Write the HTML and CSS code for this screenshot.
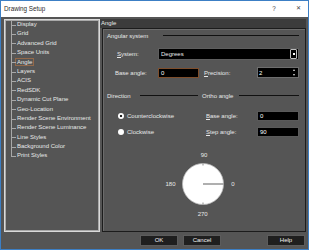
FILE: index.html
```html
<!DOCTYPE html>
<html lang="en">
<head>
    <meta charset="UTF-8">
    <title>Drawing Setup</title>
    <link rel="stylesheet" href="styles.css">
</head>
<body>

<div class="window">
    <div class="titlebar">
        <span class="title">Drawing Setup</span>
        <span class="tb-btn tb-help">?</span>
        <span class="tb-btn tb-close">&#x2715;</span>
    </div>

    <div class="main">
        <div class="tree">
            <ul>
                <li>Display</li>
                <li>Grid</li>
                <li>Advanced Grid</li>
                <li>Space Units</li>
                <li><span class="sel">Angle</span></li>
                <li>Layers</li>
                <li>ACIS</li>
                <li>RedSDK</li>
                <li>Dynamic Cut Plane</li>
                <li>Geo-Location</li>
                <li>Render Scene Environment</li>
                <li>Render Scene Luminance</li>
                <li>Line Styles</li>
                <li>Background Color</li>
                <li>Print Styles</li>
            </ul>
        </div>

        <div class="page">
            <div class="page-head">Angle</div>
            <div class="page-body">
                <div class="section">
                    <span class="sec-label w-angular">Angular system</span>
                    <i class="rule"></i>
                </div>

                <div class="row-system">
                    <label class="lbl-system"><u>S</u>ystem:</label>
                    <div class="combo">
                        <span>Degrees</span>
                        <span class="drop"><i></i></span>
                    </div>
                </div>

                <div class="row-base">
                    <label class="lbl-base">Base angle:</label>
                    <div class="field field-focus">0</div>
                    <label class="lbl-prec"><u>P</u>recision:</label>
                    <div class="field spin">
                        <span>2</span>
                        <span class="arrows"><i class="up"></i><i class="down"></i></span>
                    </div>
                </div>

                <div class="cols">
                    <div class="col">
                        <div class="section">
                            <span class="sec-label w-direction">Direction</span>
                            <i class="rule"></i>
                        </div>
                        <div class="radio-row first">
                            <span class="radio checked"></span>
                            <span>Counterclockwise</span>
                        </div>
                        <div class="radio-row">
                            <span class="radio"></span>
                            <span>Clockwise</span>
                        </div>
                    </div>
                    <div class="col">
                        <div class="section">
                            <span class="sec-label w-ortho">Ortho angle</span>
                            <i class="rule"></i>
                        </div>
                        <div class="ortho-row first">
                            <label><u>B</u>ase angle:</label>
                            <div class="field">0</div>
                        </div>
                        <div class="ortho-row">
                            <label><u>S</u>tep angle:</label>
                            <div class="field">90</div>
                        </div>
                    </div>
                </div>

                <svg class="dial" width="90" height="72" viewBox="0 0 90 72">
                    <text x="46" y="6.5" text-anchor="middle">90</text>
                    <text x="12.5" y="35.6" text-anchor="middle">180</text>
                    <text x="75" y="35.6" text-anchor="middle">0</text>
                    <text x="44.7" y="66.2" text-anchor="middle">270</text>
                    <circle cx="45" cy="34" r="20.5" fill="#fff" stroke="#bcbcbc" stroke-width="0.8"/>
                    <line x1="45" y1="13.5" x2="45" y2="15.5" stroke="#8a8a8a" stroke-width="1"/>
                    <line x1="45" y1="52.5" x2="45" y2="54.5" stroke="#8a8a8a" stroke-width="1"/>
                    <line x1="45" y1="34" x2="65.5" y2="34" stroke="#7a7a7a" stroke-width="1.2"/>
                </svg>
            </div>
        </div>
    </div>

    <div class="footer">
        <button class="btn">OK</button>
        <button class="btn">Cancel</button>
        <button class="btn btn-help">Help</button>
    </div>
</div>

</body>
</html>
```

FILE: styles.css
```css
* {box-sizing: border-box;}
html, body {margin: 0; padding: 0;}
body {
    width: 309px;
    height: 250px;
    overflow: hidden;
    background: #555;
    font-family: "Liberation Sans", Arial, sans-serif;
    font-size: 6px;
    color: #e8e8e8;
}
u {text-decoration: underline; text-underline-offset: 1px;}

.window {
    width: 309px;
    height: 250px;
    border: 1px solid #3c7fc5;
    background: #555;
    display: flex;
    flex-direction: column;
}

/* title bar */
.titlebar {
    flex: none;
    height: 16px;
    background: #fff;
    color: #2b2b2b;
    display: flex;
    align-items: flex-start;
    padding: 3px 5px 0 3px;
    line-height: 9px;
    font-size: 6.3px;
}
.titlebar .title {flex: 1;}
.tb-btn {width: 10px; text-align: center; color: #444;}
.tb-close {margin-left: 14px; font-size: 6px;}

/* main area */
.main {
    flex: 1;
    display: flex;
    padding: 2px 2px 0 3px;
    min-height: 0;
}

.tree {
    width: 96px;
    flex: none;
    border: 1px solid #dadada;
    box-shadow: inset 0 0 0 1px #a9a9a9;
}
.tree ul {list-style: none; margin: 0; padding: 0;}
.tree li {
    position: relative;
    height: 9.4px;
    line-height: 9.4px;
    padding-left: 12px;
    white-space: nowrap;
}
.tree li::before {
    content: "";
    position: absolute;
    left: 6px;
    top: 4.7px;
    width: 5px;
    border-top: 1px solid #a8a8a8;
}
.tree li::after {
    content: "";
    position: absolute;
    left: 6px;
    top: 0;
    bottom: 0;
    border-left: 1px solid #a8a8a8;
}
.tree li:last-child::after {bottom: 4.7px;}
.tree .sel {
    display: inline-block;
    line-height: 6px;
    padding: 0 1px;
    margin-left: -2px;
    border: 1px solid #93694a;
}

.page {
    flex: 1;
    display: flex;
    flex-direction: column;
}
.page-head {
    height: 9px;
    line-height: 9px;
    background: #3c3c3c;
    padding-left: 1px;
    flex: none;
}
.page-body {
    flex: 1;
    margin-left: 2px;
    border: 1px solid #1c1c1c;
    box-shadow: inset 1px 1px 0 #6c6c6c;
    padding: 0 6px 0 4px;
}

.section {
    display: flex;
    align-items: center;
    height: 9px;
    margin-top: 2px;
}
.sec-label {flex: none; white-space: nowrap;}
.w-angular {width: 56px;}
.w-direction {width: 33px;}
.w-ortho {width: 37px; margin-left: -1px;}
.rule {flex: 1; height: 1px; background: #111;}

.row-system {
    display: flex;
    align-items: center;
    height: 12px;
    margin-top: 8px;
}
.lbl-system {width: 51px; padding-left: 10px; flex: none;}
.combo {
    flex: 1;
    height: 12px;
    background: #000;
    border: 1px solid #5e5e5e;
    display: flex;
    align-items: center;
    padding-left: 2px;
}
.drop {
    margin-left: auto;
    margin-right: 1px;
    width: 7px;
    height: 10px;
    border: 1px solid #bdbdbd;
    border-radius: 1px;
    display: flex;
    align-items: center;
    justify-content: center;
}
.drop i {width: 2px; height: 2px; background: #fff;}

.row-base {
    display: grid;
    grid-template-columns: 51px 41px 1fr 42px;
    align-items: center;
    height: 11px;
    margin-top: 7px;
}
.lbl-base {padding-left: 8px;}
.lbl-prec {padding-left: 5px;}

.field {
    height: 10px;
    line-height: 8px;
    background: #000;
    border: 1px solid #5a5a5a;
    padding-left: 2px;
    color: #fff;
}
.field-focus {border-color: #7e4e2c;}
.spin {
    height: 11px;
    display: flex;
    align-items: center;
    border-color: #6e6e6e;
    padding-left: 1px;
}
.arrows {
    margin-left: auto;
    margin-right: 3px;
    display: flex;
    flex-direction: column;
    gap: 3px;
}
.arrows i {width: 0; height: 0; border-left: 1.5px solid transparent; border-right: 1.5px solid transparent;}
.arrows .up {border-bottom: 2px solid #ddd;}
.arrows .down {border-top: 2px solid #ddd;}

.cols {
    display: grid;
    grid-template-columns: 91px 96px;
    column-gap: 5px;
    margin-top: 11px;
}
.col {display: flex; flex-direction: column;}

.radio-row {
    display: flex;
    align-items: center;
    height: 10px;
    margin-top: 6px;
}
.radio-row.first, .ortho-row.first {margin-top: 11px;}
.radio {
    width: 6px;
    height: 6px;
    border-radius: 50%;
    background: #fff;
    margin-left: 11px;
    margin-right: 3px;
}
.radio.checked {background: radial-gradient(circle, #222 0 1.1px, #fff 1.6px);}

.ortho-row {
    display: grid;
    grid-template-columns: 54px 42px;
    align-items: center;
    height: 10px;
    margin-top: 6px;
}
.ortho-row label {padding-left: 3px;}

.dial {display: block; margin: 13px auto 0;}
.dial text {fill: #e8e8e8; font-family: "Liberation Sans", Arial, sans-serif; font-size: 6px;}

/* buttons */
.footer {
    flex: none;
    height: 17px;
    display: flex;
    gap: 5px;
    padding: 3px 3px 0 139px;
}
.btn {
    width: 38px;
    height: 11px;
    padding: 0;
    background: #1f1f1f;
    border: 1px solid #5c5c5c;
    color: #f2f2f2;
    font-family: "Liberation Sans", Arial, sans-serif;
    font-size: 6px;
    line-height: 9px;
}
.btn-help {margin-left: auto;}
```
